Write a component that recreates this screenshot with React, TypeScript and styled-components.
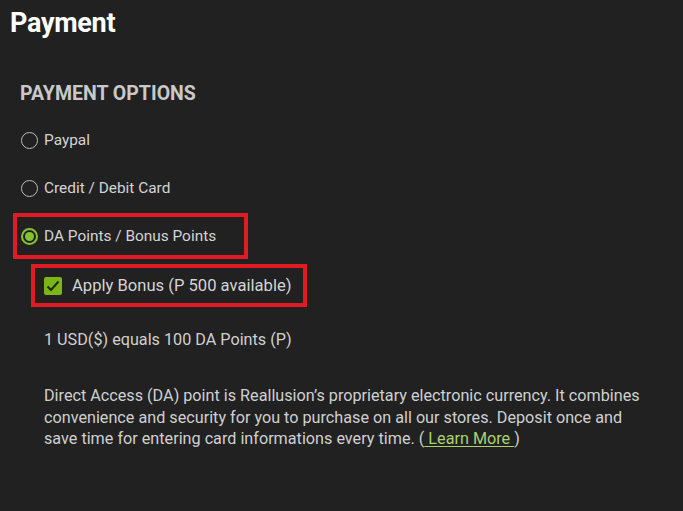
import * as React from "react";
import styled, { createGlobalStyle } from "styled-components";

const GlobalStyle = createGlobalStyle`
  html, body {
    margin: 0;
    padding: 0;
    background: #212121;
  }
  body {
    font-family: Roboto, "Liberation Sans", sans-serif;
    color: #d4d4d4;
  }
`;

const SPage = styled.div`
  width: 683px;
  height: 511px;
  box-sizing: border-box;
  padding: 7px 0 0 10px;
  background: #212121;
  overflow: hidden;
`;

const STitle = styled.h1`
  margin: 0;
  font-size: 27px;
  line-height: 32px;
  font-weight: 700;
  letter-spacing: -0.3px;
  color: #ffffff;
`;

const SSection = styled.div`
  padding: 43px 0 0 10px;
`;

const SHeading = styled.h2`
  margin: 0 0 11px;
  font-size: 19.5px;
  line-height: 24px;
  font-weight: 700;
  color: #c9c9c9;
`;

const SList = styled.div`
  display: flex;
  flex-direction: column;
  align-items: flex-start;
  gap: 2px;
  margin-left: -7px;
`;

interface IBoxProps {
  marked?: boolean;
}

const SOptionRow = styled.label<IBoxProps>`
  display: flex;
  align-items: center;
  gap: 6px;
  box-sizing: border-box;
  height: 46px;
  width: 235px;
  padding: 0 4px;
  border: 4px solid ${({ marked }) => (marked ? "#e01b24" : "transparent")};
  font-size: 15.4px;
  color: #d4d4d4;
`;

const SRadio = styled.span<{ checked?: boolean }>`
  flex: none;
  width: 17px;
  height: 17px;
  box-sizing: border-box;
  border-radius: 50%;
  border: ${({ checked }) => (checked ? "2px solid #86c232" : "1px solid #bdbdbd")};
  display: flex;
  align-items: center;
  justify-content: center;

  &::after {
    content: "";
    display: ${({ checked }) => (checked ? "block" : "none")};
    width: 9px;
    height: 9px;
    border-radius: 50%;
    background: #86c232;
  }
`;

const SCheckRow = styled.label<IBoxProps>`
  display: flex;
  align-items: center;
  gap: 10px;
  box-sizing: border-box;
  height: 43px;
  width: 276px;
  margin: 3px 0 0 18px;
  padding: 0 9px;
  border: 4px solid ${({ marked }) => (marked ? "#e01b24" : "transparent")};
  font-size: 16.6px;
  color: #d4d4d4;
`;

const SCheckbox = styled.span`
  flex: none;
  width: 18px;
  height: 18px;
  border-radius: 2px;
  background: #7cb518;
  display: flex;
  align-items: center;
  justify-content: center;
`;

const SInfo = styled.div`
  padding: 0 0 0 24px;
  width: 606px;
  font-size: 16.2px;
  color: #d0d0d0;
`;

const SRate = styled.p`
  margin: 22px 0 34px;
  line-height: 22px;
`;

const SText = styled.p`
  margin: 0;
  line-height: 21.5px;
`;

const SLink = styled.a`
  color: #a9d36a;
  text-decoration: underline;
  text-underline-offset: 2px;
`;

const options = [
  { label: "Paypal", checked: false },
  { label: "Credit / Debit Card", checked: false },
  { label: "DA Points / Bonus Points", checked: true },
];

const App = () => (
  <SPage>
    <GlobalStyle />
    <STitle>Payment</STitle>
    <SSection>
      <SHeading>PAYMENT OPTIONS</SHeading>
      <SList>
        {options.map((o) => (
          <SOptionRow key={o.label} marked={o.checked}>
            <SRadio checked={o.checked} />
            {o.label}
          </SOptionRow>
        ))}
        <SCheckRow marked>
          <SCheckbox>
            <svg width="14" height="12" viewBox="0 0 14 12" fill="none">
              <path d="M1.5 6.5 L5 10 L12.5 1.5" stroke="#1d2a10" strokeWidth="2" />
            </svg>
          </SCheckbox>
          Apply Bonus (P 500 available)
        </SCheckRow>
      </SList>
      <SInfo>
        <SRate>1 USD($) equals 100 DA Points (P)</SRate>
        <SText>
          Direct Access (DA) point is Reallusion’s proprietary electronic currency. It combines
          convenience and security for you to purchase on all our stores. Deposit once and save
          time for entering card informations every time. (<SLink href="#"> Learn More </SLink>)
        </SText>
      </SInfo>
    </SSection>
  </SPage>
);

export default App;
